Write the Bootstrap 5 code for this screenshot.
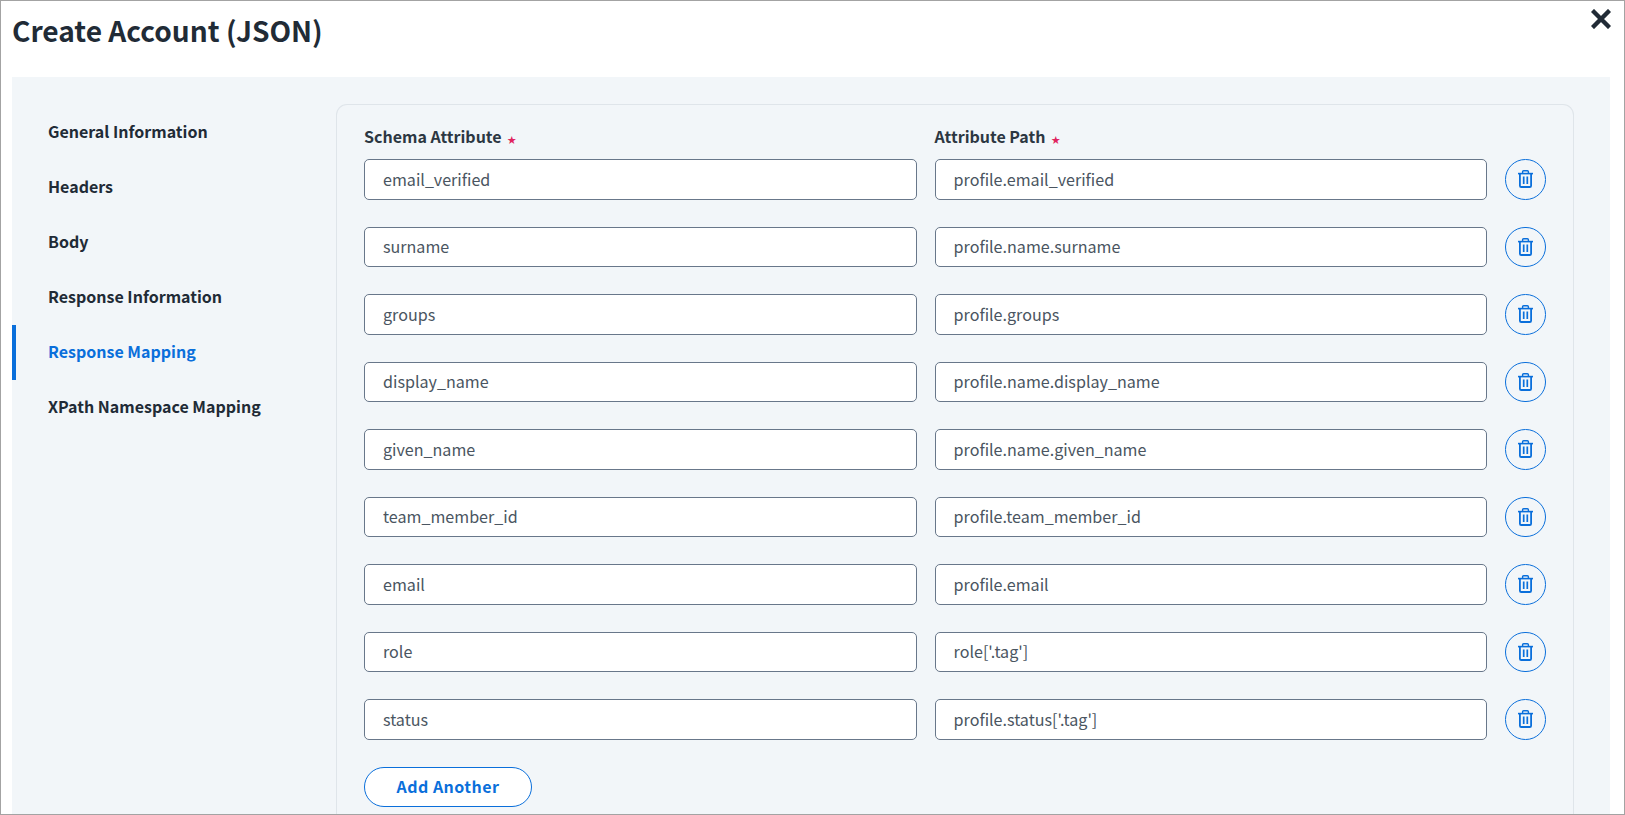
<!doctype html>
<html lang="en">
<head>
<meta charset="utf-8">
<title>Create Account (JSON)</title>
<link rel="stylesheet" href="https://cdn.jsdelivr.net/npm/bootstrap@5.3.0/dist/css/bootstrap.min.css">
<style>
html,body{height:100%;overflow:hidden}
body{font-family:"Noto Sans CJK SC","Noto Sans",sans-serif;color:#212b36;background:#fff}
.shell{height:815px;border:1px solid #a3a3a3;overflow:hidden;display:flex;flex-direction:column;padding:0 14px 0 11px}
.head-bar{height:76px;flex:none}
.head-title{font-size:28.1px;font-weight:700;line-height:36px;margin:11px 0 0;color:#212b36}
.close-x{background:none;border:0;padding:0;width:20px;height:20px;margin:8px -1px 0 0;color:#212b36;line-height:0}
.panel{background:#f2f6f9;flex:1 1 auto;min-height:0;padding-top:27px;display:flex}
.side-nav{width:324px;flex:none;padding-top:1px}
.side-link{display:flex;align-items:center;height:55px;padding:0 0 4px 32px;border-left:4px solid transparent;font-size:16px;font-weight:700;color:#212b36;text-decoration:none;line-height:20px}
.side-link.on{border-left-color:#0a6fdb;color:#0a6fdb}
.map-card{width:1238px;flex:none;background:transparent;border:1px solid #dfe5ea;border-bottom:0;border-radius:11px 11px 0 0;padding:19px 27px 0 27px}
.label-row,.map-row{display:flex;gap:18px}
.label-row{height:35px}
.label-row>div{width:552.6px;font-size:16px;font-weight:700;line-height:24px;color:#2c3742}
.req{color:#e0245e;font-size:9px;margin-left:2px;vertical-align:0}
.map-row{margin-bottom:27px;align-items:center}
.map-row .form-control{width:552.6px;height:40.5px;flex:none;border:1px solid #68778a;border-radius:5px;padding:0 18px 1px;font-size:16.1px;color:#4a5561;background:#fff}
.trash-btn{width:40.5px;height:40.5px;flex:none;padding:0 0 0 1px;border:1px solid #0a6fdb;border-radius:50%;background:transparent;color:#0a6fdb;display:flex;align-items:center;justify-content:center;line-height:0}
.add-btn{width:168px;height:40px;padding:0 0 2px;border:1px solid #0a6fdb;border-radius:20px;background:#fff;color:#0a6fdb;font-size:16px;font-weight:700;line-height:1;letter-spacing:.45px}
</style>
</head>
<body>
<div class="shell">
  <div class="head-bar d-flex justify-content-between align-items-start">
    <h1 class="head-title">Create Account (JSON)</h1>
    <button class="close-x" type="button" aria-label="Close">
      <svg width="20" height="20" viewBox="0 0 20 20"><path d="M3 3 L17 17 M17 3 L3 17" stroke="currentColor" stroke-width="4.4" stroke-linecap="square" fill="none"/></svg>
    </button>
  </div>
  <div class="panel">
    <nav class="side-nav">
      <a class="side-link" href="#">General Information</a>
      <a class="side-link" href="#">Headers</a>
      <a class="side-link" href="#">Body</a>
      <a class="side-link" href="#">Response Information</a>
      <a class="side-link on" href="#">Response Mapping</a>
      <a class="side-link" href="#">XPath Namespace Mapping</a>
    </nav>
    <section class="map-card">
      <div class="label-row">
        <div>Schema Attribute <span class="req">★</span></div>
        <div>Attribute Path <span class="req">★</span></div>
      </div>
      <div id="rows"></div>
      <button class="add-btn" type="button">Add Another</button>
    </section>
  </div>
</div>
<script>
var data=[["email_verified","profile.email_verified"],["surname","profile.name.surname"],["groups","profile.groups"],["display_name","profile.name.display_name"],["given_name","profile.name.given_name"],["team_member_id","profile.team_member_id"],["email","profile.email"],["role","role['.tag']"],["status","profile.status['.tag']"]];
var icon='<svg width="15" height="18" viewBox="0 0 15 18" fill="none" stroke="currentColor"><path d="M0 3.6H15" stroke-width="1.6"/><path d="M4.6 3.2V1.8Q4.6 .8 5.6 .8H9.4Q10.4 .8 10.4 1.8V3.2" stroke-width="1.4"/><path d="M1.9 3.6V15.7Q1.9 17 3.2 17H11.8Q13.1 17 13.1 15.7V3.6" stroke-width="1.8"/><path d="M5.7 6.5V14M9.3 6.5V14" stroke-width="1.7"/></svg>';
document.getElementById('rows').innerHTML=data.map(function(r){return '<div class="map-row"><input class="form-control" type="text" value="'+r[0]+'" aria-label="Schema Attribute"><input class="form-control" type="text" value="'+r[1]+'" aria-label="Attribute Path"><button class="trash-btn" type="button" aria-label="Delete">'+icon+'</button></div>';}).join('');
</script>
</body>
</html>
